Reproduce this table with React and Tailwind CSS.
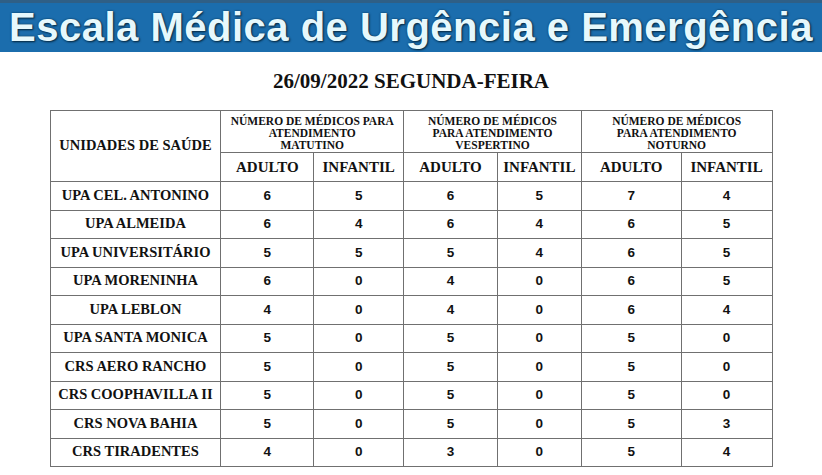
import React from "react";

const rows = [
  ["UPA CEL. ANTONINO", 6, 5, 6, 5, 7, 4],
  ["UPA ALMEIDA", 6, 4, 6, 4, 6, 5],
  ["UPA UNIVERSITÁRIO", 5, 5, 5, 4, 6, 5],
  ["UPA MORENINHA", 6, 0, 4, 0, 6, 5],
  ["UPA LEBLON", 4, 0, 4, 0, 6, 4],
  ["UPA SANTA MONICA", 5, 0, 5, 0, 5, 0],
  ["CRS AERO RANCHO", 5, 0, 5, 0, 5, 0],
  ["CRS COOPHAVILLA II", 5, 0, 5, 0, 5, 0],
  ["CRS NOVA BAHIA", 5, 0, 5, 0, 5, 3],
  ["CRS TIRADENTES", 4, 0, 3, 0, 5, 4],
];

const serif = "font-['Liberation_Serif','Times_New_Roman',serif]";
const cell = "border border-[#707070] p-0 text-center align-middle";

export default function App() {
  return (
    <div className="w-[822px] h-[475px] bg-white overflow-hidden">
      <div className="h-[52px] bg-[#1b6dad] border-t-[3px] border-[#2f5f86] flex items-center justify-center">
        <span className="font-['Liberation_Sans',Arial,sans-serif] font-bold text-[40px] leading-[49px] tracking-[0.5px] text-[#e6f8fc] [text-shadow:0_0_2px_#0a3655,1px_1px_2px_#06263d]">
          Escala Médica de Urgência e Emergência
        </span>
      </div>
      <div className={`${serif} font-bold text-[21px] leading-[24px] text-[#111] text-center mt-[17px]`}>
        26/09/2022 SEGUNDA-FEIRA
      </div>
      <table className={`mx-auto mt-[17px] border-collapse w-[723px] text-[#111]`}>
        <colgroup>
          <col className="w-[171px]" />
          <col className="w-[93px]" />
          <col className="w-[90px]" />
          <col className="w-[94px]" />
          <col className="w-[84px]" />
          <col className="w-[100px]" />
          <col className="w-[91px]" />
        </colgroup>
        <thead>
          <tr className="h-[42px]">
            <th rowSpan={2} className={`${cell} ${serif} font-bold text-[14.5px]`}>
              UNIDADES DE SAÚDE
            </th>
            <th colSpan={2} className={`${cell} ${serif} font-bold text-[11.5px] leading-[12px] align-top pt-[4px]`}>
              NÚMERO DE MÉDICOS PARA<br />ATENDIMENTO<br />MATUTINO
            </th>
            <th colSpan={2} className={`${cell} ${serif} font-bold text-[11.5px] leading-[12px] align-top pt-[4px]`}>
              NÚMERO DE MÉDICOS<br />PARA ATENDIMENTO<br />VESPERTINO
            </th>
            <th colSpan={2} className={`${cell} ${serif} font-bold text-[11.5px] leading-[12px] align-top pt-[4px]`}>
              NÚMERO DE MÉDICOS<br />PARA ATENDIMENTO<br />NOTURNO
            </th>
          </tr>
          <tr className="h-[29px]">
            {["ADULTO", "INFANTIL", "ADULTO", "INFANTIL", "ADULTO", "INFANTIL"].map((t, i) => (
              <th key={i} className={`${cell} ${serif} font-bold text-[15px]`}>
                {t}
              </th>
            ))}
          </tr>
        </thead>
        <tbody>
          {rows.map((r) => (
            <tr key={r[0]} className="h-[28.5px]">
              <td className={`${cell} ${serif} font-bold text-[14.5px] whitespace-nowrap`}>{r[0]}</td>
              {r.slice(1).map((v, i) => (
                <td key={i} className={`${cell} font-['Liberation_Sans',Arial,sans-serif] font-bold text-[13.5px]`}>
                  {v}
                </td>
              ))}
            </tr>
          ))}
        </tbody>
      </table>
    </div>
  );
}
